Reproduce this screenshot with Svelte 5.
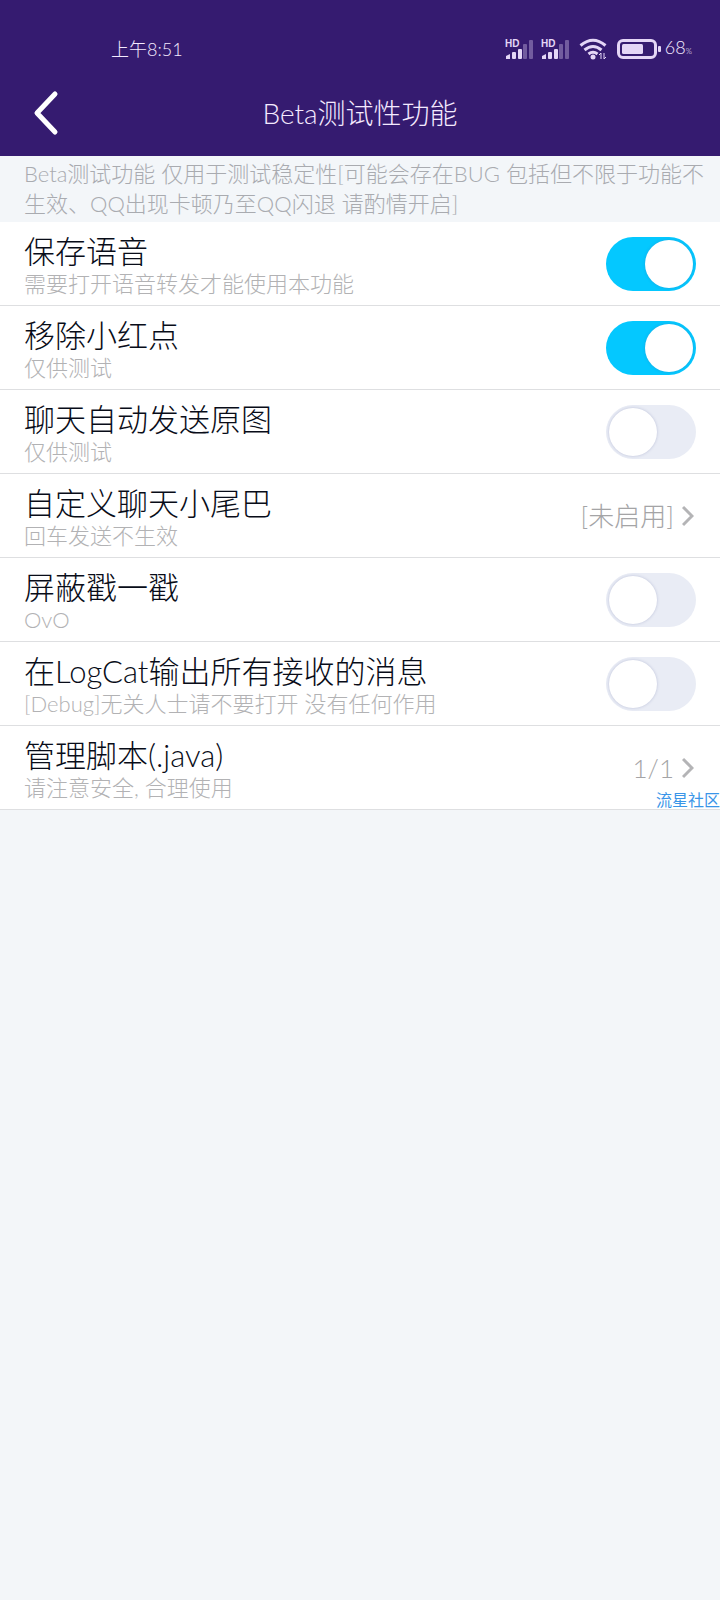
<script>
  let items = $state([
    { id: 'voice', title: '保存语音', desc: '需要打开语音转发才能使用本功能', type: 'switch', on: true },
    { id: 'reddot', title: '移除小红点', desc: '仅供测试', type: 'switch', on: true },
    { id: 'origin', title: '聊天自动发送原图', desc: '仅供测试', type: 'switch', on: false },
    { id: 'tail', title: '自定义聊天小尾巴', desc: '回车发送不生效', type: 'link', value: '[未启用]' },
    { id: 'poke', title: '屏蔽戳一戳', desc: 'OvO', type: 'switch', on: false },
    { id: 'logcat', title: '在LogCat输出所有接收的消息', desc: '[Debug]无关人士请不要打开 没有任何作用', type: 'switch', on: false },
    { id: 'script', title: '管理脚本(.java)', desc: '请注意安全, 合理使用', type: 'link', value: '1/1', mark: '流星社区' }
  ]);
</script>

{#snippet signal()}
  <svg class="signal" viewBox="0 0 28 22" aria-hidden="true">
    <text x="0" y="9">HD</text>
    <path d="M1 21v-3l4-2v5z" />
    <rect x="7" y="14" width="4" height="7" rx="1" />
    <rect x="13" y="11" width="4" height="10" rx="1" />
    <rect class="dim" x="18" y="6" width="4" height="15" rx="1" />
    <rect class="dim" x="24" y="2" width="4" height="19" rx="1" />
  </svg>
{/snippet}

{#snippet body(item)}
  <span class="texts">
    <span class="title">{item.title}</span>
    <span class="desc">{item.desc}</span>
  </span>
{/snippet}

<div class="page" lang="zh-CN">
  <div class="top">
    <div class="status">
      <span class="time">上午8:51</span>
      <div class="icons">
        {@render signal()}
        {@render signal()}
        <svg class="wifi" viewBox="0 0 28 22" aria-hidden="true">
          <path d="M1.500 7.500Q14-3 26.500 7.500M5.500 12Q14 5 22.500 12M9.500 16Q14 12.500 18.500 16" />
          <circle cx="14" cy="19" r="2.5" />
          <path class="thin" d="M22 21v-6l-2 2M25 15v6l2-2" />
        </svg>
        <svg class="battery" viewBox="0 0 44 20" aria-hidden="true">
          <rect class="case" x="1.5" y="1.5" width="37" height="17" rx="4.5" />
          <rect x="5" y="5" width="21" height="10" rx="1.5" />
          <rect x="41" y="7" width="3" height="6" rx="1" />
        </svg>
        <span class="percent">68<small>%</small></span>
      </div>
    </div>
    <header>
      <button class="back" aria-label="返回">
        <svg viewBox="0 0 28 46"><path d="M23 4 5 23l18 19" /></svg>
      </button>
      <h1>Beta测试性功能</h1>
    </header>
  </div>

  <p class="note">Beta测试功能 仅用于测试稳定性[可能会存在BUG 包括但不限于功能不生效、QQ出现卡顿乃至QQ闪退 请酌情开启]</p>

  <main>
    {#each items as item (item.id)}
      {#if item.type === 'switch'}
        <label class="row">
          {@render body(item)}
          <input type="checkbox" role="switch" bind:checked={item.on} />
        </label>
      {:else}
        <a class="row" href="#{item.id}">
          {@render body(item)}
          <span class="value">{item.value}</span>
          <svg class="arrow" viewBox="0 0 12 22" aria-hidden="true"><path d="M1 2l9 9-9 9" /></svg>
          {#if item.mark}
            <span class="mark">{item.mark}</span>
          {/if}
        </a>
      {/if}
    {/each}
  </main>
</div>

<style>
  :global(body) {
    background: #f3f6f9;
  }

  .page {
    min-height: 100vh;
    background: #f3f6f9;
    font-family: Lato, 'Noto Sans CJK SC', sans-serif;
    font-weight: 300;
  }

  .top {
    background: #351b70;
    color: #f4eaff;
  }

  .status {
    display: flex;
    align-items: flex-end;
    justify-content: space-between;
    height: 62px;
    padding: 0 28px 0 111px;
  }

  .time {
    font-size: 18px;
    line-height: 26px;
  }

  .icons {
    display: flex;
    align-items: center;
    height: 26px;
    fill: #e4d6f6;
  }

  .signal {
    width: 28px;
    height: 22px;
    margin-right: 8px;
  }

  .signal text {
    font: bold 10px 'Liberation Sans', sans-serif;
  }

  .dim {
    opacity: 0.35;
  }

  .wifi {
    width: 28px;
    height: 22px;
    margin: 0 10px 0 2px;
  }

  .wifi path {
    fill: none;
    stroke: #e4d6f6;
    stroke-width: 3;
  }

  .wifi .thin {
    stroke-width: 1;
  }

  .battery {
    width: 44px;
    height: 20px;
    margin-right: 4px;
  }

  .battery .case {
    fill: none;
    stroke: #e4d6f6;
    stroke-width: 3;
  }

  .percent {
    font-size: 18px;
    line-height: 26px;
  }

  .percent small {
    font-size: 8px;
  }

  header {
    display: grid;
    grid-template-columns: 1fr auto 1fr;
    align-items: center;
    height: 94px;
    padding: 8px 32px 0;
    box-sizing: border-box;
  }

  .back {
    justify-self: start;
    display: flex;
    padding: 0;
    border: 0;
    background: none;
    cursor: pointer;
  }

  .back svg {
    width: 28px;
    height: 46px;
  }

  .back path {
    fill: none;
    stroke: #fff;
    stroke-width: 5;
    stroke-linecap: round;
    stroke-linejoin: round;
  }

  h1 {
    margin: 0;
    font-size: 28px;
    font-weight: 300;
    line-height: 40px;
  }

  .note {
    margin: 0;
    padding: 3px 16px 3px 24px;
    color: #a9abb0;
    font-size: 22px;
    line-height: 30px;
  }

  .row {
    position: relative;
    display: flex;
    align-items: center;
    padding: 11px 24px 6px;
    border-bottom: 1px solid #dedfe1;
    background: #fff;
    color: inherit;
    text-decoration: none;
    cursor: pointer;
  }

  .texts {
    flex: 1;
    min-width: 0;
  }

  .title,
  .desc {
    display: block;
  }

  .title {
    color: #080c18;
    font-size: 31px;
    line-height: 36px;
  }

  .desc {
    color: #b2b2b4;
    font-size: 22px;
    line-height: 30px;
  }

  input {
    flex: none;
    appearance: none;
    display: flex;
    width: 90px;
    height: 54px;
    margin: -5px 0 0;
    padding: 3px;
    box-sizing: border-box;
    border-radius: 27px;
    background: #e9ecf5;
    cursor: pointer;
  }

  input::before {
    content: '';
    width: 48px;
    height: 48px;
    border-radius: 50%;
    background: #fff;
    box-shadow: 0 0 3px rgba(80, 90, 150, 0.3);
  }

  input:checked {
    justify-content: flex-end;
    background: #04c8ff;
  }

  .value {
    margin-top: -5px;
    color: #a4a4a6;
    font-size: 26px;
    line-height: 36px;
  }

  .arrow {
    width: 12px;
    height: 22px;
    margin: -5px 2px 0 8px;
  }

  .arrow path {
    fill: none;
    stroke: #b4b4b6;
    stroke-width: 3;
  }

  .mark {
    position: absolute;
    right: 0;
    bottom: 0;
    color: #3a95e8;
    font-size: 16px;
    font-weight: 400;
    line-height: 18px;
  }
</style>
